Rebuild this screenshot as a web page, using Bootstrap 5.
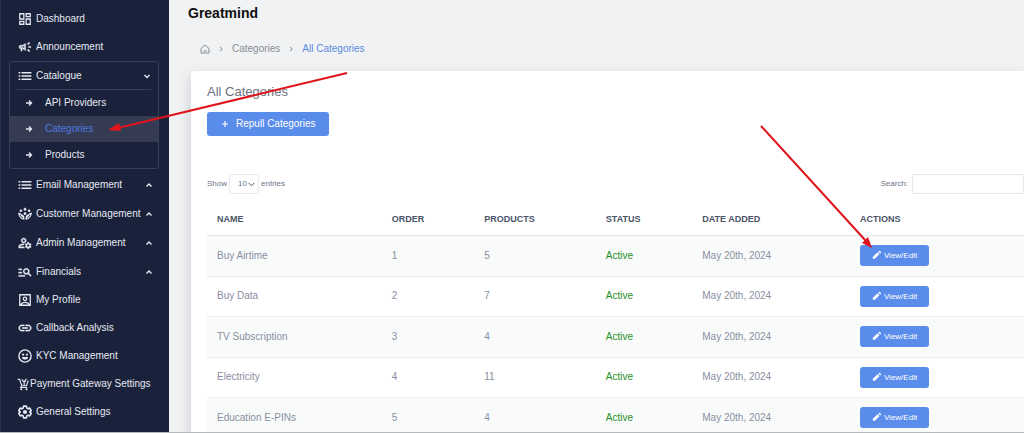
<!DOCTYPE html>
<html lang="en">
<head>
<meta charset="utf-8">
<meta name="viewport" content="width=device-width, initial-scale=1">
<title>Greatmind - All Categories</title>
<link href="https://cdn.jsdelivr.net/npm/bootstrap@5.3.0/dist/css/bootstrap.min.css" rel="stylesheet">
<style>
  body { font-family: "Liberation Sans", Arial, sans-serif; font-size: 10px; line-height: 14px; background: #f1f2f3; color: #888ea0; }
  .app-shell { border-bottom: 1px solid #b4b8bc; }
  a { text-decoration: none; }

  /* Sidebar */
  .side { flex: 0 0 169px; background: #1a223b; border-left: 1px solid #2b3350; padding-top: 5px; }
  .side a { color: #e6e9f2; white-space: nowrap; }
  .side-item { height: 28px; padding: 0 15px 0 17px; gap: 4px; }
  .side-item.has-sub { height: 29px; }
  .side-item.tight { gap: 0; padding-left: 15px; }
  .side-item svg { width: 14px; height: 14px; fill: currentColor; flex: none; }
  .side-item .chev, .sub-item svg { width: 8px; height: 8px; fill: none; stroke: currentColor; }
  .side-item .chev { margin-right: 1px; }
  .side-group { margin: 0 10px 1px 8px; border: 1px solid #363e58; border-radius: 3px; }
  .side-group .side-item { height: 28px; margin: 0 7px; padding: 0 0 0 1px; border-bottom: 1px solid #363e58; }
  .side-group .side-item .chev { margin-right: 0; }
  .sub-item { height: 26px; padding-left: 15px; gap: 12px; }
  .side .sub-item.active { background: #363b54; }
  .side .sub-item.active span { color: #4f79e0; }

  /* Content */
  .content { overflow-y: auto; scrollbar-width: none; }
  .brand { font-size: 14px; line-height: 18px; color: #0e0e10; padding: 4px 0 0 19px; }
  .trail { padding: 20px 0 15px 31px; gap: 8px; }
  .trail a { color: #888d95; }
  .trail a.here { color: #5a8ae2; }
  .trail svg { width: 10px; height: 10px; fill: none; stroke: #888d95; }
  .trail svg.sep { width: 6px; height: 6px; }
  .panel { margin-left: 22px; padding: 13px 0 0 16px; background: #fff; border-radius: 4px 0 0 0; box-shadow: -2px 4px 12px rgba(80, 90, 110, .2); }
  .panel h1 { font-size: 13px; line-height: 16px; color: #6c7280; margin-bottom: 12px; }
  .btn-main, .btn-main:hover { background: #5a8cec; color: #fff; border: 0; border-radius: 3px; }
  .btn-repull { font-size: 10px; line-height: 14px; padding: 5px 13px; gap: 6px; }
  .btn-repull svg { width: 10px; height: 10px; stroke: #fff; }
  .btn-edit { font-size: 8px; line-height: 12px; padding: 5px 12px 4px; gap: 2px; }
  .btn-edit svg { width: 10px; height: 10px; fill: #fff; }
  .tools { font-size: 8px; margin-top: 38px; color: #6c7488; }
  .tools .entries { gap: 2px; }
  .tools .form-select { width: 30px; height: 20px; padding: 0 0 0 8px; font-size: 8px; line-height: 12px; min-height: 0; border-color: #e8eaee; border-radius: 3px; color: #6c7488; background-size: 7px 7px; background-position: right 3px center; }
  .tools .form-control { width: 112px; height: 20px; min-height: 0; padding: 0 6px; font-size: 8px; border-color: #e4e7ea; border-radius: 2px; }
  .cat-table { table-layout: fixed; margin: 10px 0 0; }
  .cat-table > thead th { height: 31px; padding: 0 10px; font-size: 9px; color: #4a5368; border-bottom: 1px solid #dfe6e7; vertical-align: middle; }
  .cat-table > tbody td { height: 40px; padding: 0 10px; color: #888ea0; border-bottom: 1px solid #eaefef; vertical-align: middle; box-shadow: none; }
  .cat-table > tbody tr:nth-child(odd) td { height: 41px; background: #f9fbfb; }
  .cat-table > tbody td.on { color: #1f8f1f; }
  .c-name { width: 21.4%; } .c-order { width: 11.3%; } .c-prod { width: 14.9%; } .c-stat { width: 11.8%; } .c-date { width: 19.3%; }

  /* Red pointers lying over the page */
  .pointers { position: absolute; left: 0; top: 0; pointer-events: none; }
</style>
</head>
<body>
<svg width="0" height="0" class="position-absolute" aria-hidden="true">
  <symbol id="pen" viewBox="0 0 24 24"><path d="M2 16v5h5L17.800 9.900l-4.400-4.400zM21.500 6.500a1.500 1.500 0 0 0 0-2l-2.300-2.300a1.500 1.500 0 0 0-2 0L15 4l4.500 4.500z"/></symbol>
  <symbol id="list" viewBox="0 0 24 24"><path d="M1 5h3v2.600H1zM6 5h17v2.600H6zM1 10.700h3v2.600H1zM6 10.700h17v2.600H6zM1 16.400h3V19H1zM6 16.400h17V19H6z"/></symbol>
  <symbol id="up" viewBox="0 0 8 8"><path d="M1.500 5.500 4 3l2.500 2.500" stroke-width="1.400"/></symbol>
  <symbol id="down" viewBox="0 0 8 8"><path d="M1.500 3 4 5.500 6.500 3" stroke-width="1.400"/></symbol>
  <symbol id="go" viewBox="0 0 8 8"><path d="M1 4h5.500M4 1.500 6.500 4 4 6.500" stroke-width="1.300"/></symbol>
  <symbol id="sep" viewBox="0 0 6 6"><path d="M2 .8 4.200 3 2 5.200" stroke-width="1"/></symbol>
</svg>

<div class="app-shell d-flex vh-100 overflow-hidden">
  <nav class="side" aria-label="Main menu">
    <a href="#" class="side-item d-flex align-items-center"><svg viewBox="0 0 24 24"><path fill="none" stroke="currentColor" stroke-width="2.200" d="M3 3h7v9H3zM14 3h7v5h-7zM14 12h7v9h-7zM3 16h7v5H3z"/></svg><span>Dashboard</span></a>
    <a href="#" class="side-item d-flex align-items-center"><svg viewBox="0 0 24 24"><path d="M18 11v2h4v-2h-4zm-2 6.610c.96.71 2.210 1.650 3.200 2.390.4-.53.8-1.070 1.200-1.600-.99-.74-2.240-1.680-3.200-2.400-.4.54-.8 1.080-1.200 1.610zM20.400 5.600c-.4-.53-.8-1.070-1.200-1.600-.99.74-2.240 1.680-3.200 2.400.4.53.8 1.070 1.200 1.600.96-.72 2.210-1.650 3.200-2.400zM4 9c-1.100 0-2 .9-2 2v2c0 1.100.9 2 2 2h1v4h2v-4h1l5 3V6L8 9H4zm5.030 1.710L11 9.530v4.940l-1.970-1.180-.48-.29H4v-2h4.550l.48-.29z" stroke="currentColor" stroke-width=".8"/></svg><span>Announcement</span></a>
    <div class="side-group">
      <a href="#" class="side-item d-flex align-items-center" aria-expanded="true"><svg><use href="#list"/></svg><span>Catalogue</span><svg class="chev ms-auto"><use href="#down"/></svg></a>
      <a href="#" class="sub-item d-flex align-items-center"><svg><use href="#go"/></svg><span>API Providers</span></a>
      <a href="#" class="sub-item active d-flex align-items-center" aria-current="page"><svg><use href="#go"/></svg><span>Categories</span></a>
      <a href="#" class="sub-item d-flex align-items-center"><svg><use href="#go"/></svg><span>Products</span></a>
    </div>
    <a href="#" class="side-item has-sub d-flex align-items-center"><svg><use href="#list"/></svg><span>Email Management</span><svg class="chev ms-auto"><use href="#up"/></svg></a>
    <a href="#" class="side-item has-sub d-flex align-items-center"><svg viewBox="0 0 24 24"><path d="M12 1l3 3-3 3-3-3zM0 10c3 0 5 1 6.500 3 2.500.5 4.500 2.500 4.500 5v4C5 22 1 17 0 10zM24 10c-3 0-5 1-6.500 3-2.500.5-4.500 2.500-4.500 5v4c6 0 10-5 11-12z"/><circle cx="5" cy="6.500" r="2.200"/><circle cx="19" cy="6.500" r="2.200"/><circle cx="12" cy="11.500" r="2.400"/><path d="M3.500 13c1 3 2.500 5 5 6M20.500 13c-1 3-2.500 5-5 6" fill="none" stroke="#1a223b" stroke-width="1.600"/></svg><span>Customer Management</span><svg class="chev ms-auto"><use href="#up"/></svg></a>
    <a href="#" class="side-item has-sub d-flex align-items-center"><svg viewBox="1 2 22 20"><path d="M4 18v-.65c0-.34.16-.66.41-.81C6.100 15.530 8.030 15 10 15c.03 0 .05 0 .08.01.1-.7.3-1.370.59-1.980-.22-.02-.44-.03-.67-.03-2.420 0-4.680.67-6.610 1.820-.88.52-1.390 1.500-1.390 2.530V20h9.260c-.42-.6-.75-1.280-.97-2H4zM10 12c2.210 0 4-1.790 4-4s-1.790-4-4-4-4 1.790-4 4 1.790 4 4 4zm0-6c1.100 0 2 .9 2 2s-.9 2-2 2-2-.9-2-2 .9-2 2-2zM20.750 16c0-.22-.03-.42-.06-.63l1.140-1.010-1-1.730-1.450.49c-.32-.27-.68-.48-1.080-.63L18 11h-2l-.3 1.490c-.4.15-.76.36-1.080.63l-1.450-.49-1 1.730 1.140 1.010c-.03.21-.06.41-.06.63s.03.42.06.63l-1.140 1.010 1 1.730 1.450-.49c.32.27.68.48 1.080.63L16 21h2l.3-1.490c.4-.15.76-.36 1.080-.63l1.450.49 1-1.730-1.140-1.010c.03-.21.06-.41.06-.63zM17 18c-1.100 0-2-.9-2-2s.9-2 2-2 2 .9 2 2-.9 2-2 2z" stroke="currentColor" stroke-width=".6"/></svg><span>Admin Management</span><svg class="chev ms-auto"><use href="#up"/></svg></a>
    <a href="#" class="side-item has-sub d-flex align-items-center"><svg viewBox="1 2 22 20"><path d="M7 9H2V7h5v2zm0 3H2v2h5v-2zm13.590 7l-3.830-3.830c-.8.52-1.740.83-2.760.83-2.760 0-5-2.240-5-5s2.240-5 5-5 5 2.240 5 5c0 1.020-.31 1.960-.83 2.750L22 17.590 20.590 19zM17 11c0-1.650-1.350-3-3-3s-3 1.350-3 3 1.350 3 3 3 3-1.350 3-3zM2 19h10v-2H2v2z" stroke="currentColor" stroke-width=".5"/></svg><span>Financials</span><svg class="chev ms-auto"><use href="#up"/></svg></a>
    <a href="#" class="side-item d-flex align-items-center"><svg viewBox="0 0 24 24"><path fill="none" stroke="currentColor" stroke-width="2.200" d="M3 3h18v18H3zM5 20c2-5 12-5 14 0"/><circle cx="12" cy="10" r="3" fill="none" stroke="currentColor" stroke-width="2.200"/></svg><span>My Profile</span></a>
    <a href="#" class="side-item d-flex align-items-center"><svg viewBox="1 1 22 22"><path d="M3.900 12c0-1.710 1.390-3.100 3.100-3.100h4V7H7c-2.760 0-5 2.240-5 5s2.240 5 5 5h4v-1.900H7c-1.710 0-3.100-1.390-3.100-3.100zM8 13h8v-2H8v2zm9-6h-4v1.900h4c1.710 0 3.100 1.390 3.100 3.100s-1.390 3.100-3.100 3.100h-4V17h4c2.760 0 5-2.240 5-5s-2.240-5-5-5z" stroke="currentColor" stroke-width=".5"/></svg><span>Callback Analysis</span></a>
    <a href="#" class="side-item d-flex align-items-center"><svg viewBox="0 0 24 24"><circle cx="12" cy="12" r="10.500" fill="none" stroke="currentColor" stroke-width="2.400"/><path d="M7 8h3.500v3H7zM13.500 8H17v3h-3.500zM6.500 13.500h11c-1 6-10 6-11 0z"/></svg><span>KYC Management</span></a>
    <a href="#" class="side-item tight d-flex align-items-center"><svg viewBox="0 0 24 24"><path d="M3 4h3l4 11h8l3-9M10 4l3 4 4-1M18 3l-4 5v6M10 15l-2 3h11" fill="none" stroke="currentColor" stroke-width="2"/><circle cx="9" cy="21" r="1.800"/><circle cx="18" cy="21" r="1.800"/></svg><span>Payment Gateway Settings</span></a>
    <a href="#" class="side-item d-flex align-items-center"><svg viewBox="0 0 24 24"><path d="M9.500 2h5l.6 3.200 2 1.200 3.100-1.100 2.500 4.300-2.500 2.200v.4l2.500 2.200-2.500 4.300-3.100-1.100-2 1.200-.6 3.200h-5l-.6-3.200-2-1.200-3.100 1.100-2.500-4.300 2.500-2.200v-.4L1.300 9.600l2.500-4.300 3.100 1.100 2-1.200z" fill="none" stroke="currentColor" stroke-width="2.800" stroke-linejoin="round"/><circle cx="12" cy="12" r="3.600"/></svg><span>General Settings</span></a>
  </nav>

  <main class="content flex-grow-1">
    <div class="brand fw-bold">Greatmind</div>
    <nav class="trail d-flex align-items-center" aria-label="Breadcrumb">
      <a href="#" class="d-flex" aria-label="Home"><svg viewBox="0 0 10 10"><path d="M1 4.500 5 1l4 3.500V9H1zM3.200 7h3.600"/></svg></a>
      <svg class="sep"><use href="#sep"/></svg>
      <a href="#">Categories</a>
      <svg class="sep"><use href="#sep"/></svg>
      <a href="#" class="here" aria-current="page">All Categories</a>
    </nav>
    <section class="panel">
      <h1 class="fw-normal">All Categories</h1>
      <button type="button" class="btn btn-main btn-repull d-inline-flex align-items-center"><svg viewBox="0 0 10 10"><path d="M5 2v6M2 5h6" stroke-width="1.200"/></svg>Repull Categories</button>
      <div class="tools d-flex justify-content-between align-items-center">
        <div class="entries d-flex align-items-center"><label for="len">Show</label><select id="len" class="form-select"><option>10</option><option>25</option><option>50</option></select><label for="len">entries</label></div>
        <div class="d-flex align-items-center gap-1"><label for="find">Search:</label><input id="find" type="search" class="form-control"></div>
      </div>
      <table class="table cat-table">
        <thead><tr><th class="c-name">NAME</th><th class="c-order">ORDER</th><th class="c-prod">PRODUCTS</th><th class="c-stat">STATUS</th><th class="c-date">DATE ADDED</th><th>ACTIONS</th></tr></thead>
        <tbody>
          <tr><td>Buy Airtime</td><td>1</td><td>5</td><td class="on">Active</td><td>May 20th, 2024</td><td><button type="button" class="btn btn-main btn-edit d-flex"><svg><use href="#pen"/></svg>View/Edit</button></td></tr>
          <tr><td>Buy Data</td><td>2</td><td>7</td><td class="on">Active</td><td>May 20th, 2024</td><td><button type="button" class="btn btn-main btn-edit d-flex"><svg><use href="#pen"/></svg>View/Edit</button></td></tr>
          <tr><td>TV Subscription</td><td>3</td><td>4</td><td class="on">Active</td><td>May 20th, 2024</td><td><button type="button" class="btn btn-main btn-edit d-flex"><svg><use href="#pen"/></svg>View/Edit</button></td></tr>
          <tr><td>Electricity</td><td>4</td><td>11</td><td class="on">Active</td><td>May 20th, 2024</td><td><button type="button" class="btn btn-main btn-edit d-flex"><svg><use href="#pen"/></svg>View/Edit</button></td></tr>
          <tr><td>Education E-PINs</td><td>5</td><td>4</td><td class="on">Active</td><td>May 20th, 2024</td><td><button type="button" class="btn btn-main btn-edit d-flex"><svg><use href="#pen"/></svg>View/Edit</button></td></tr>
        </tbody>
      </table>
    </section>
  </main>
</div>

<svg class="pointers" width="900" height="260" viewBox="0 0 900 260" aria-hidden="true">
  <g stroke="#e0141c" stroke-width="2" fill="#e0141c">
    <path d="M347 73 118 128M761 126l105 115"/>
    <path stroke="none" d="m108 130 11-7 2 8zM872 248l-10-5 6-6z"/>
  </g>
</svg>
<script src="https://cdn.jsdelivr.net/npm/bootstrap@5.3.0/dist/js/bootstrap.bundle.min.js"></script>
</body>
</html>
